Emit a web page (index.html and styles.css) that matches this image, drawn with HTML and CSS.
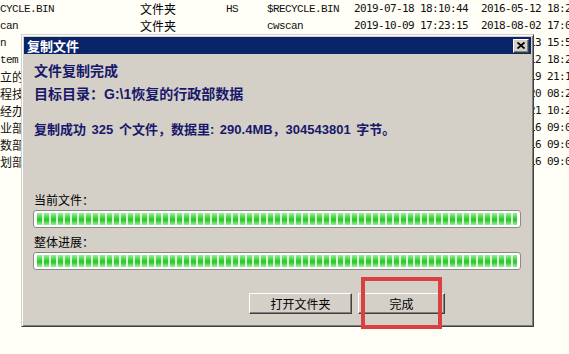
FILE: index.html
```html
<!DOCTYPE html>
<html lang="zh-CN">
<head>
    <meta charset="UTF-8">
    <meta name="viewport" content="width=device-width, initial-scale=1.0">
    <title>复制文件</title>
    <link rel="stylesheet" href="styles.css">
</head>
<body>
    <!-- lista de arquivos por trás da janela -->
    <div class="file-list">
        <div class="row">
            <span class="name">CYCLE.BIN</span>
            <span class="type">文件夹</span>
            <span class="attr">HS</span>
            <span class="short">$RECYCLE.BIN</span>
            <span class="date">2019-07-18 18:10:44</span>
            <span class="date">2016-05-12 18:24:31</span>
        </div>
        <div class="row">
            <span class="name">can</span>
            <span class="type">文件夹</span>
            <span class="attr"></span>
            <span class="short">cwscan</span>
            <span class="date">2019-10-09 17:23:15</span>
            <span class="date">2018-08-02 17:05:12</span>
        </div>
        <div class="row"><span class="name">n</span><span></span><span></span><span></span><span></span><span class="date">2019-05-13 15:52:08</span></div>
        <div class="row"><span class="name">tem</span><span></span><span></span><span></span><span></span><span class="date">2019-07-12 18:21:40</span></div>
        <div class="row"><span class="name cjk">立的文件</span><span></span><span></span><span></span><span></span><span class="date">2018-11-19 21:13:02</span></div>
        <div class="row"><span class="name cjk">程技术部</span><span></span><span></span><span></span><span></span><span class="date">2019-03-20 08:27:51</span></div>
        <div class="row"><span class="name cjk">经办</span><span></span><span></span><span></span><span></span><span class="date">2019-02-21 10:25:16</span></div>
        <div class="row"><span class="name cjk">业部</span><span></span><span></span><span></span><span></span><span class="date">2019-01-16 09:03:44</span></div>
        <div class="row"><span class="name cjk">数部</span><span></span><span></span><span></span><span></span><span class="date">2019-01-16 09:04:10</span></div>
        <div class="row"><span class="name cjk">划部</span><span></span><span></span><span></span><span></span><span class="date">2019-01-16 09:05:27</span></div>
    </div>

    <div class="dialog">
        <div class="titlebar">
            <span class="title">复制文件</span>
            <button class="close">
                <svg width="8" height="7" viewBox="0 0 8 7"><path d="M0.5 0.5 L7.5 6.5 M7.5 0.5 L0.5 6.5" stroke="#000" stroke-width="1.8" fill="none"/></svg>
            </button>
        </div>
        <div class="dialog-body">
            <p class="headline">文件复制完成</p>
            <p class="target">目标目录：G:\1恢复的行政部数据</p>
            <p class="summary">复制成功 325 个文件，数据里: 290.4MB，304543801 字节。</p>

            <div class="progress-group">
                <div class="label">当前文件：</div>
                <div class="bar"><div class="fill"></div></div>
                <div class="label second">整体进展：</div>
                <div class="bar"><div class="fill"></div></div>
            </div>

            <div class="buttons">
                <button class="btn btn-open">打开文件夹</button>
                <button class="btn btn-done">完成</button>
            </div>
        </div>
    </div>

    <div class="highlight"></div>
</body>
</html>
```

FILE: styles.css
```css
body {
    margin: 0;
    background-color: #fffef7;
    font-family: "Liberation Sans", "Noto Sans CJK SC", sans-serif;
    color: #000;
    overflow: hidden;
}

/* lista de arquivos */
.file-list {
    width: 569px;
}
.row {
    display: grid;
    grid-template-columns: 140px 86px 41px 87px 127px 1fr;
    height: 17px;
    align-items: center;
    white-space: nowrap;
    overflow: hidden;
}
.name, .short, .attr {
    font-family: "Liberation Mono", "Noto Sans CJK SC", monospace;
    font-size: 11px;
    letter-spacing: -0.6px;
    color: #111;
}
.name.cjk {
    font-family: "Noto Sans CJK SC", sans-serif;
    font-size: 12px;
    letter-spacing: 0;
}
.type {
    font-family: "Noto Sans CJK SC", sans-serif;
    font-size: 12px;
}
.date {
    font-family: "DejaVu Sans Mono", monospace;
    font-size: 11px;
    letter-spacing: -0.62px;
    color: #111;
}

/* janela de diálogo */
.dialog {
    position: absolute;
    left: 21px;
    top: 34px;
    width: 513px;
    height: 293px;
    box-sizing: border-box;
    background-color: #d4d0c8;
    border: 1px solid;
    border-color: #d4d0c8 #404040 #404040 #d4d0c8;
    box-shadow: inset 1px 1px #fff, inset -1px -1px #808080;
    padding: 2px;
    display: flex;
    flex-direction: column;
}
.titlebar {
    height: 17px;
    background-color: #0a246a;
    display: flex;
    align-items: center;
    justify-content: space-between;
}
.title {
    color: #fff;
    font-family: "Noto Sans CJK SC", sans-serif;
    font-weight: bold;
    font-size: 13px;
    line-height: 17px;
    padding-left: 3px;
}
.close {
    width: 16px;
    height: 14px;
    margin-right: 2px;
    padding: 0;
    background-color: #d4d0c8;
    border: 1px solid;
    border-color: #fff #404040 #404040 #fff;
    box-shadow: inset -1px -1px #808080;
    display: flex;
    align-items: center;
    justify-content: center;
}

.dialog-body {
    padding: 8px 10px 0 10px;
}
.dialog-body p {
    margin: 0;
    color: #18186a;
    font-weight: bold;
}
.headline {
    font-size: 14px;
    line-height: 18px;
}
.target {
    font-size: 14px;
    line-height: 18px;
    margin-top: 5px !important;
}
.summary {
    font-size: 13px;
    line-height: 18px;
    word-spacing: 2px;
    margin-top: 18px !important;
}

.progress-group {
    margin-top: 53px;
}
.label {
    font-family: "Noto Sans CJK SC", sans-serif;
    font-size: 12px;
    line-height: 16px;
}
.label.second {
    margin-top: 6px;
}
.bar {
    margin: 2px 0 0 -1px;
    height: 18px;
    box-sizing: border-box;
    border: 1px solid #8a8a8a;
    border-radius: 3px;
    background-color: #fff;
    padding: 2px 3px;
}
.fill {
    height: 100%;
    background:
        repeating-linear-gradient(90deg, transparent 0 5px, #dcf5d9 5px 7px),
        linear-gradient(#a4eaa0, #2fd22f 45%, #27c827 60%, #a4eaa0);
}

.buttons {
    margin-top: 23px;
    display: flex;
    justify-content: flex-end;
    gap: 6px;
    padding-right: 76px;
}
.btn {
    height: 21px;
    padding: 0;
    font-family: "Noto Sans CJK SC", sans-serif;
    font-size: 12px;
    color: #000;
    background-color: #d4d0c8;
    border: 1px solid;
    border-color: #fff #404040 #404040 #fff;
    box-shadow: inset -1px -1px #808080;
}
.btn-open {
    width: 103px;
}
.btn-done {
    width: 87px;
}

/* marcação vermelha sobre o botão */
.highlight {
    position: absolute;
    left: 361px;
    top: 277px;
    width: 81px;
    height: 52px;
    box-sizing: border-box;
    border: 4px solid #d9403f;
}
```
